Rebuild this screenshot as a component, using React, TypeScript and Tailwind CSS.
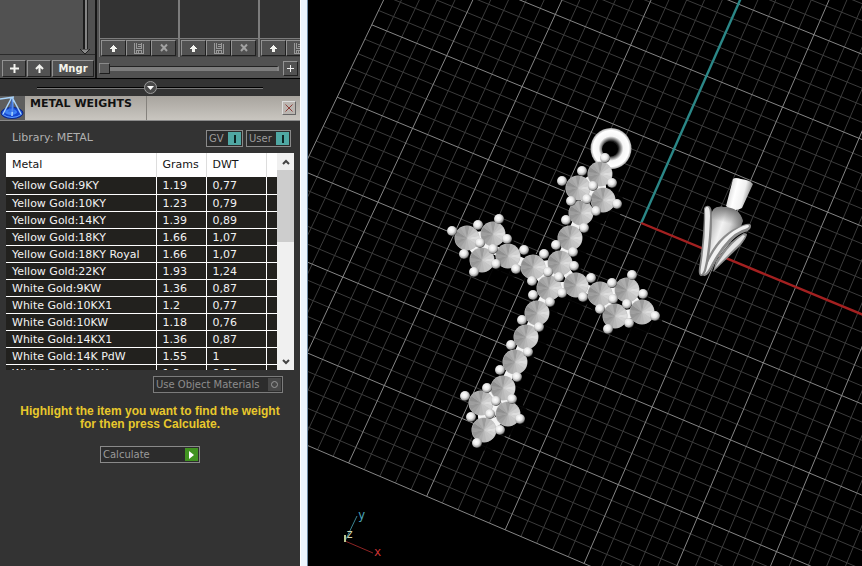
import { useState } from 'react';

const METALS = [
  ['Yellow Gold:9KY', '1.19', '0,77'],
  ['Yellow Gold:10KY', '1.23', '0,79'],
  ['Yellow Gold:14KY', '1.39', '0,89'],
  ['Yellow Gold:18KY', '1.66', '1,07'],
  ['Yellow Gold:18KY Royal', '1.66', '1,07'],
  ['Yellow Gold:22KY', '1.93', '1,24'],
  ['White Gold:9KW', '1.36', '0,87'],
  ['White Gold:10KX1', '1.2', '0,77'],
  ['White Gold:10KW', '1.18', '0,76'],
  ['White Gold:14KX1', '1.36', '0,87'],
  ['White Gold:14K PdW', '1.55', '1'],
  ['White Gold:14KW', '1.3', '0,77'],
];

const GEMS = [
  [600, 174], [578, 188], [603, 200], [581, 213], [570, 238], [467, 238], [493, 234], [482, 260],
  [508, 256], [533, 267], [560, 263], [549, 288], [576, 285], [600, 294], [627, 290], [615, 316],
  [642, 312], [537, 313], [526, 337], [515, 362], [503, 388], [481, 403], [508, 414], [484, 430],
];

const BEADS = [
  [605, 158], [582, 171], [562, 181], [593, 186], [612, 183], [571, 201], [587, 199], [617, 204],
  [596, 211], [566, 220], [584, 228], [556, 245], [573, 252], [452, 231], [478, 225], [499, 219],
  [507, 239], [480, 243], [493, 249], [464, 254], [474, 272], [496, 264], [524, 250], [516, 269],
  [544, 254], [574, 266], [548, 272], [559, 277], [532, 281], [591, 278], [612, 283], [632, 275],
  [643, 294], [533, 295], [562, 293], [583, 297], [550, 302], [613, 299], [627, 304], [600, 309],
  [655, 316], [629, 323], [608, 329], [522, 320], [539, 327], [511, 345], [528, 352], [500, 370],
  [517, 377], [487, 388], [512, 399], [496, 401], [465, 396], [471, 417], [490, 414], [520, 419],
  [500, 430], [477, 443],
];

// facet greys, clockwise from the right-hand side of the stone
const FACETS = ['#dedede', '#d2d2d2', '#c6c6c6', '#c2c2c2', '#b8b8b8', '#adadad', '#a0a0a0', '#959595', '#9e9e9e', '#8f8f8f', '#a4a4a4', '#adadad', '#9b9b9b', '#b4b4b4', '#c2c2c2', '#d0d0d0'];

// construction plane -> screen
function project(i: number, j: number) {
  const w = 1 - 0.0027 * i + 0.0071 * j;
  return {
    x: (75.1 * i + 37.6 * j + 641.2) / w,
    y: (31.2 * i - 72.94 * j + 223) / w,
  };
}

function GridLine({ from, to, color, width = 1 }: { from: number[]; to: number[]; color: string; width?: number }) {
  const a = project(from[0], from[1]);
  const b = project(to[0], to[1]);
  return <line x1={a.x} y1={a.y} x2={b.x} y2={b.y} stroke={color} strokeWidth={width} />;
}

function Grid() {
  const steps = Array.from({ length: 56 }, (_, n) => n);
  const minor = steps.filter((n) => n % 5 !== 0);
  const major = steps.filter((n) => n % 5 === 0);
  const lines = (list: number[], color: string) =>
    list.map((n) => (
      <g key={n}>
        <GridLine from={[-4 + n / 5, -4]} to={[-4 + n / 5, 7]} color={color} />
        <GridLine from={[-4, -4 + n / 5]} to={[7, -4 + n / 5]} color={color} />
      </g>
    ));
  return (
    <g>
      {lines(minor, '#3b3b3b')}
      {lines(major, '#858585')}
      <GridLine from={[0, 0]} to={[0, 4]} color="#2b8787" width={2.4} />
      <GridLine from={[0, 0]} to={[4, 0]} color="#a32020" width={2.4} />
    </g>
  );
}

function Gem({ x, y }: { x: number; y: number }) {
  const r = 12;
  return (
    <g transform={`translate(${x} ${y})`}>
      <circle r={12.5} fill="#bdbdbd" />
      {FACETS.map((fill, n) => {
        const a = ((n - 0.5) / 16) * Math.PI * 2;
        const b = ((n + 0.6) / 16) * Math.PI * 2;
        return (
          <path
            key={n}
            d={`M0 0L${r * Math.cos(a)} ${r * Math.sin(a)}A${r} ${r} 0 0 1 ${r * Math.cos(b)} ${r * Math.sin(b)}Z`}
            fill={fill}
          />
        );
      })}
    </g>
  );
}

function Scene() {
  return (
    <svg viewBox="308 0 554 566" preserveAspectRatio="xMinYMin slice" className="absolute inset-0 h-full w-full" aria-label="Perspective viewport">
      <defs>
        <radialGradient id="bead" cx="0.42" cy="0.38" r="0.6">
          <stop offset="0" stopColor="#fff" />
          <stop offset="0.5" stopColor="#e8e8e8" />
          <stop offset="0.85" stopColor="#a0a0a0" />
          <stop offset="1" stopColor="#4c4c4c" />
        </radialGradient>
        <radialGradient id="bail" gradientUnits="userSpaceOnUse" cx="611" cy="148.500" r="20.500">
          <stop offset="0.36" stopColor="#1c1c1c" />
          <stop offset="0.46" stopColor="#777" />
          <stop offset="0.6" stopColor="#f6f6f6" />
          <stop offset="0.88" stopColor="#fff" />
          <stop offset="1" stopColor="#a4a4a4" />
        </radialGradient>
        <linearGradient id="stem" x1="0" y1="0.3" x2="1" y2="0.6">
          <stop offset="0" stopColor="#c4c4c4" />
          <stop offset="0.35" stopColor="#fff" />
          <stop offset="0.65" stopColor="#f0f0f0" />
          <stop offset="1" stopColor="#626262" />
        </linearGradient>
        <linearGradient id="body" gradientUnits="userSpaceOnUse" x1="711" y1="222" x2="741" y2="232">
          <stop offset="0" stopColor="#b5b5b5" />
          <stop offset="0.35" stopColor="#f2f2f2" />
          <stop offset="0.6" stopColor="#dadada" />
          <stop offset="1" stopColor="#6a6a6a" />
        </linearGradient>
        <linearGradient id="cap" gradientUnits="userSpaceOnUse" x1="726" y1="206" x2="722" y2="222">
          <stop offset="0" stopColor="#6c6c6c" />
          <stop offset="1" stopColor="#6c6c6c" stopOpacity="0" />
        </linearGradient>
      </defs>
      <rect x="308" width="554" height="566" fill="#000" />
      <Grid />

      {GEMS.map(([x, y]) => (
        <circle key={`s${x}-${y}`} cx={x + 4} cy={y + 4} r="17" fill="#000" opacity="0.85" />
      ))}
      <circle cx="611" cy="148.500" r="20.500" fill="url(#bail)" />
      <ellipse cx="610" cy="149" rx="8" ry="7.500" fill="#000" />
      <g stroke="#f4f4f4" strokeWidth="9" fill="none" strokeLinejoin="round">
        <path d="M600 174L578 188L603 200Z" fill="#f4f4f4" />
        <path d="M590 190L581 213L570 238L560 263L549 288L537 313L526 337L515 362L503 388L484 430" />
        <path d="M467 238L493 234L482 260ZL508 256L533 267L560 263L576 285L549 288L533 267" />
        <path d="M576 285L600 294L627 290L642 312L615 316L600 294" />
        <path d="M503 388L481 403L484 430L508 414Z" />
      </g>
      {GEMS.map(([x, y]) => (
        <Gem key={`${x}-${y}`} x={x} y={y} />
      ))}
      {BEADS.map(([x, y]) => (
        <circle key={`${x}-${y}`} cx={x} cy={y} r="5" fill="url(#bead)" />
      ))}

      {/* bail seen from the side */}
      <path d="M733 179Q735 177 741 179Q750 180 753 184L742 208Q734 213 726 206Z" fill="url(#stem)" />
      <path d="M712 212Q714 206 724 207Q739 207 743 221L739 232L706 272L708 240Z" fill="url(#body)" />
      <path d="M712 212Q714 206 724 207Q739 207 743 221L738 226L712 226Z" fill="url(#cap)" />
      <path d="M747 234Q747 238 739 247L713 272L716 261Q729 241 744 233Z" fill="#8e8e8e" />
      <path d="M745 236Q742 242 735 248L715 268Q727 246 743 235Z" fill="#e4e4e4" />
      <path d="M743 225Q751 222 751 226Q751 230 745 232Q730 237 714 264Q708 277 704 276Q700 275 704 267Q716 234 743 225Z" fill="#8a8a8a" />
      <path d="M743 226Q749 224 749 226Q749 228 742 230Q727 236 712 263Q706 275 704 274Q703 273 706 267Q719 236 743 226Z" fill="#f2f2f2" />
      <path d="M704 208Q706 205 709 206Q712 207 712 216Q712 250 706 271Q704 276 701 276Q698 275 699 268Q704 236 704 208Z" fill="#858585" />
      <path d="M705 209Q706 206 708 207Q710 208 710 216Q709 250 704 270Q702 275 701 274Q700 273 701 267Q706 236 705 209Z" fill="#eaeaea" />

      {/* world axes */}
      <path d="M345 541L357 516" stroke="#3b8290" strokeWidth="1" />
      <path d="M345 541L373 553" stroke="#8d2424" strokeWidth="1" />
      <path d="M345 542V535" stroke="#b9c690" strokeWidth="2" />
      <g fontFamily="'DejaVu Sans Mono', monospace" fontSize="12">
        <text x="358" y="519" fill="#4aa3b8">y</text>
        <text x="346" y="538" fill="#d4d4b0">z</text>
        <text x="374" y="556" fill="#d03434">x</text>
      </g>
    </svg>
  );
}

const bevel = 'flex shrink-0 items-center justify-center border border-t-[#929292] border-l-[#929292] border-r-[#202020] border-b-[#202020] bg-[#525252]';

function ArrowIcon() {
  return (
    <svg width="9" height="9" viewBox="0 0 9 9" fill="#f4f4f0" shapeRendering="crispEdges">
      <path d="M4 1h1v1h1v1h1v1h1v1h-2v3h-3v-3h-2v-1h1v-1h1v-1h1z" />
    </svg>
  );
}

function DiskIcon() {
  return (
    <svg width="12" height="12" viewBox="0 0 12 12" fill="none" stroke="#999" shapeRendering="crispEdges">
      <path d="M1.500 1v10h9v-9M3.500 1v5h5v-5M5 2.500h3M5 4.500h3M3.500 11v-3h5v3M5.500 9v2" />
    </svg>
  );
}

function CrossIcon() {
  return (
    <svg width="10" height="10" viewBox="0 0 10 10" stroke="#a2a2a2" strokeWidth="2">
      <path d="M2 1.500L8 8M8 1.500L2 8" />
    </svg>
  );
}

function PreviewColumn() {
  return (
    <div className="flex w-20 shrink-0 flex-col border-x border-x-[#7c7c7c] bg-[#333]">
      <div className="h-[39px] border-b border-[#7c7c7c]" />
      <div className="flex h-[18px] items-center bg-[#444] pl-px">
        <button aria-label="Load" className={`${bevel} h-4 w-[25px]`}><ArrowIcon /></button>
        <button aria-label="Save" className={`${bevel} h-4 w-[25px]`}><DiskIcon /></button>
        <button aria-label="Remove" className={`${bevel} h-4 w-[25px]`}><CrossIcon /></button>
      </div>
    </div>
  );
}

function TopPanels() {
  return (
    <div className="flex h-[79px] border-b border-black bg-[#515151]">
      <div className="flex w-[97px] shrink-0 flex-col border-r-2 border-[#161616]">
        <div className="flex h-[55px] justify-end border-b border-[#2a2a2a] pr-1">
          <div className="flex w-3 flex-col items-center">
            <div className="w-[5px] grow border-l-2 border-r border-l-[#1c1c1c] border-r-[#222] bg-[#858585]" />
            <svg width="10" height="5" viewBox="0 0 10 5" className="shrink-0">
              <path d="M0 0H10L5 5Z" fill="#8b8b8b" stroke="#222" />
            </svg>
          </div>
        </div>
        <div className="flex grow items-end gap-px pb-px pl-0.5">
          <button aria-label="Add" className={`${bevel} h-[17px] w-6`}>
            <svg width="9" height="9" viewBox="0 0 9 9" stroke="#f4f4f0" strokeWidth="2"><path d="M4.500 0V9M0 4.500H9" /></svg>
          </button>
          <button aria-label="Up" className={`${bevel} h-[17px] w-6`}>
            <svg width="9" height="9" viewBox="0 0 9 9" fill="none" stroke="#f4f4f0" strokeWidth="2"><path d="M4.500 9V1M1 5L4.500 1.500L8 5" /></svg>
          </button>
          <button className={`${bevel} h-[17px] w-[42px] text-[10px] font-bold text-[#f4f4ea]`}>Mngr</button>
        </div>
      </div>
      <div className="flex min-w-0 grow flex-col overflow-hidden pl-0.5">
        <div className="flex overflow-hidden">
          <PreviewColumn />
          <PreviewColumn />
          <PreviewColumn />
        </div>
        <div className="flex grow items-center gap-1 pt-0.5 pr-[2px]">
          <div className="flex min-w-0 grow items-center">
            <div className="size-[11px] shrink-0 border border-t-[#8a8a8a] border-l-[#8a8a8a] border-r-[#1c1c1c] border-b-[#1c1c1c] bg-[#5a5a5a]" />
            <div className="h-[5px] grow border-t border-r-2 border-[#222] border-r-[#888] bg-[#7d7d7d]" />
          </div>
          <button aria-label="Zoom in" className={`${bevel} size-[15px]`}>
            <svg width="7" height="7" viewBox="0 0 7 7" stroke="#f0f0f0"><path d="M3.500 0V7M0 3.500H7" /></svg>
          </button>
        </div>
      </div>
    </div>
  );
}

function Toggle({ label, className }: { label: string; className: string }) {
  const [on, setOn] = useState(true);
  return (
    <button
      aria-pressed={on}
      onClick={() => setOn(!on)}
      className={`flex h-[17px] items-center justify-between border border-[#8a8a8a] bg-[#2a2a2a] pr-px pl-0.5 text-[10px] text-[#9c9c9c] ${className}`}
    >
      {label}
      <span className="flex h-[13px] w-[13px] items-center justify-center bg-[#4fa7a3]">
        <span className="h-2 w-0.5 bg-[#0c2222]" />
      </span>
    </button>
  );
}

function TitleBar() {
  return (
    <div className="flex h-[25px] border-b border-[#8b8b8b] bg-linear-to-b from-[#a8a49e] to-[#c9c6c0]">
      <div className="flex w-[25px] shrink-0 items-end bg-[#5e5e5e]">
        <svg width="25" height="24" viewBox="0 0 25 24" fill="none">
          <ellipse cx="12" cy="17" rx="11" ry="5.500" fill="#1646d0" stroke="#0b2682" />
          <ellipse cx="11" cy="16" rx="6" ry="3" fill="#3f82f5" />
          <path d="M0 3L14 1M12 1L3 18M12 1L21 18M13 1L12 20" stroke="#a9d4fb" strokeWidth="1.500" />
          <path d="M12 2L8 16H15Z" fill="#2d69e6" opacity="0.7" />
          <path d="M2 18Q12 25 22 18" stroke="#5fa1ff" />
        </svg>
      </div>
      <h1 className="w-[122px] shrink-0 border-r border-[#85827d] pl-[5px] text-[11px] leading-4 font-bold text-[#111]">METAL WEIGHTS</h1>
      <div className="flex grow items-center justify-end pr-1">
        <button aria-label="Close" className="flex size-[14px] items-center justify-center border border-t-[#ddd] border-l-[#ddd] border-r-[#666] border-b-[#666] bg-[#bab5b0]">
          <svg width="8" height="8" viewBox="0 0 8 8" stroke="#8d3e3a"><path d="M0.500 0.500L7.500 7.500M7.500 0.500L0.500 7.500" /></svg>
        </button>
      </div>
    </div>
  );
}

function MetalTable() {
  return (
    <div className="mx-1.5 flex h-[217px] overflow-hidden bg-white">
      <div className="grow overflow-hidden">
        <table className="w-full table-fixed border-collapse text-left text-[11px]">
          <colgroup>
            <col />
            <col className="w-[50px]" />
            <col className="w-[60px]" />
            <col className="w-[11px]" />
          </colgroup>
          <thead>
            <tr className="h-6 text-[#151515]">
              <th className="border-r border-[#ddd] py-0 pl-1.5 font-normal">Metal</th>
              <th className="border-r border-[#ddd] py-0 pl-1.5 font-normal">Grams</th>
              <th className="border-r border-[#ddd] py-0 pl-1.5 font-normal">DWT</th>
              <th className="p-0" />
            </tr>
          </thead>
          <tbody>
            {METALS.map(([metal, grams, dwt]) => (
              <tr key={metal} className="h-[17px] border-b border-white bg-[#22211e] leading-[14px] whitespace-nowrap text-[#f2f2f2]">
                <td className="border-r border-white pt-0.5 pb-0 pl-1.5">{metal}</td>
                <td className="border-r border-white pt-0.5 pb-0 pl-1.5">{grams}</td>
                <td className="border-r border-white pt-0.5 pb-0 pl-1.5">{dwt}</td>
                <td className="p-0" />
              </tr>
            ))}
          </tbody>
        </table>
      </div>
      <div className="flex w-[17px] shrink-0 flex-col bg-[#f0f0f0]">
        <button aria-label="Scroll up" className="flex h-[17px] items-center justify-center">
          <svg width="8" height="6" viewBox="0 0 8 6" fill="none" stroke="#444" strokeWidth="2"><path d="M1 5L4 2L7 5" /></svg>
        </button>
        <div className="h-[72px] bg-[#cdcdcd]" />
        <div className="grow" />
        <button aria-label="Scroll down" className="flex h-[17px] items-center justify-center">
          <svg width="8" height="6" viewBox="0 0 8 6" fill="none" stroke="#444" strokeWidth="2"><path d="M1 1L4 4L7 1" /></svg>
        </button>
      </div>
    </div>
  );
}

export default function App() {
  return (
    <div className="flex min-h-screen bg-black font-['DejaVu_Sans',Verdana,sans-serif]">
      <aside className="w-[300px] shrink-0 bg-[#333]">
        <TopPanels />
        <div className="flex h-[17px] items-center px-[37px]">
          <div className="h-0.5 grow border-t border-b border-t-black border-b-[#777]" />
          <button aria-label="Collapse" className="flex size-[13px] items-center justify-center rounded-full border border-[#999] bg-[#4a4a4a]">
            <svg width="7" height="4" viewBox="0 0 7 4" fill="#fff"><path d="M0 0H7L3.500 4Z" /></svg>
          </button>
          <div className="h-0.5 grow border-t border-b border-t-black border-b-[#777]" />
        </div>
        <TitleBar />
        <div className="flex items-center gap-[3px] pt-[9px] pr-[9px] pb-1.5 pl-3">
          <p className="grow text-[11px] text-[#b0b0b0]">Library: METAL</p>
          <Toggle label="GV" className="w-[37px]" />
          <Toggle label="User" className="w-[45px]" />
        </div>
        <MetalTable />
        <div className="flex justify-end pt-1.5 pr-[17px]">
          <button className="flex h-[17px] w-[130px] items-center justify-between border border-[#7c7c7c] bg-[#2c2c2c] pr-px pl-0.5 text-[10px] whitespace-nowrap text-[#8c8c8c]">
            Use Object Materials
            <span className="flex size-[13px] items-center justify-center bg-[#484848]">
              <span className="size-[7px] rounded-full border border-[#999]" />
            </span>
          </button>
        </div>
        <p className="pt-3 text-center font-['Liberation_Sans',Arial,sans-serif] text-[12px] leading-[13px] font-bold text-[#e8c82c]">
          Highlight the item you want to find the weight
          <br />
          for then press Calculate.
        </p>
        <div className="flex justify-center pt-[15px]">
          <button className="flex h-[17px] w-[100px] items-center justify-between border border-[#8a8a8a] bg-[#2c2c2c] pr-px pl-0.5 text-[10px] text-[#9a9a9a]">
            Calculate
            <span className="flex size-[13px] items-center justify-center bg-[#419321]">
              <svg width="5" height="8" viewBox="0 0 5 8" fill="#fff"><path d="M0 0L5 4L0 8Z" /></svg>
            </span>
          </button>
        </div>
      </aside>
      <div className="w-2 shrink-0 border-r border-l border-r-[#6f8ba4] border-l-[#fff] bg-[#edf5fd]" />
      <main className="relative min-w-0 grow">
        <Scene />
      </main>
    </div>
  );
}
